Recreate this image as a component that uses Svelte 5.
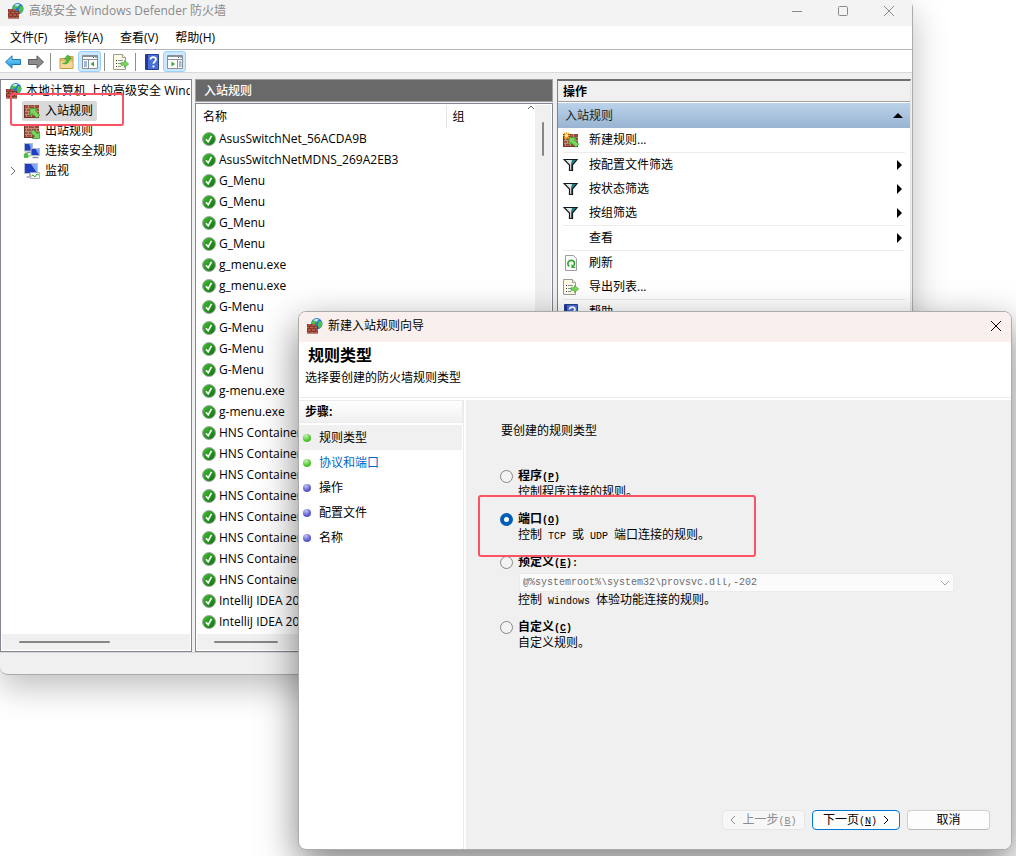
<script lang="ts">
	type Rule = { name: string; group?: string };

	const menus = ['文件(F)', '操作(A)', '查看(V)', '帮助(H)'];

	const repeat = (name: string, count: number): Rule[] => Array.from({ length: count }, () => ({ name }));

	const rules: Rule[] = [
		{ name: 'AsusSwitchNet_56ACDA9B' },
		{ name: 'AsusSwitchNetMDNS_269A2EB3' },
		...repeat('G_Menu', 4),
		...repeat('g_menu.exe', 2),
		...repeat('G-Menu', 4),
		...repeat('g-menu.exe', 2),
		...repeat('HNS Container', 8),
		...repeat('IntelliJ IDEA 20', 2)
	];

	const tree = [
		{ label: '入站规则', icon: 'in' },
		{ label: '出站规则', icon: 'out' },
		{ label: '连接安全规则', icon: 'link' },
		{ label: '监视', icon: 'monitor', expandable: true }
	];

	const actionGroups = [
		[{ label: '新建规则...', icon: 'new', submenu: false }],
		[
			{ label: '按配置文件筛选', icon: 'filter', submenu: true },
			{ label: '按状态筛选', icon: 'filter', submenu: true },
			{ label: '按组筛选', icon: 'filter', submenu: true }
		],
		[{ label: '查看', icon: '', submenu: true }],
		[
			{ label: '刷新', icon: 'refresh', submenu: false },
			{ label: '导出列表...', icon: 'export', submenu: false }
		],
		[{ label: '帮助', icon: 'help', submenu: false }]
	];

	const steps = ['规则类型', '协议和端口', '操作', '配置文件', '名称'];

	let selectedNode = $state('入站规则');
	let currentStep = $state(0);
	let ruleType = $state('port');
	let wizardOpen = $state(true);
</script>

{#snippet bricks()}
	<path d="M0 2h15v13H0z" fill="#9a4a38" />
	<path d="M0 5.500h15M0 8.500h15M0 11.500h15M4.500 2v3M10.500 2v3M7.500 6v2M2.500 6v2M12.500 6v2M4.500 9v2M2.500 12v3M7.500 12v3" stroke="#c9a08f" stroke-width=".8" fill="none" />
	<path d="M1 3.500h3M6 3.500h4M3.500 7h3M1 10h3M3.500 13.500h3" stroke="#b7604a" fill="none" />
	<path d="M0 14.500h15M.5 2v13" stroke="#6f3329" />
{/snippet}

{#snippet icon(name: string)}
	<svg class="icon" viewBox="0 0 16 16" width="16" height="16" aria-hidden="true">
		{#if name === 'firewall'}
			<circle cx="9.800" cy="5.800" r="5.700" fill="#2a77cc" />
			<path d="M5.500 3C7 1 9.500 .5 11 1l-.5 2.500L8 5.500 7 7.500 4.500 6zM12 3l3 .8.3 2.500-2 4-2-1-.5-3z" fill="#4fc04a" />
			<path d="M6.500 2.200Q9 .3 12 1.500L9.500 3.500z" fill="#c8ecff" />
			<path d="M0 6h8v2h3v7.500H0z" fill="#7d3327" />
			<path d="M1 7h2.500M4.500 7H8M0 9.500h2M3 9.500h3.500M7.500 9.500H10M1 12h3M5 12h3M9 12h2M0 14.500h2.500M3.500 14.500h3M7.500 14.500h3" stroke="#bd6650" stroke-width="1.400" />
		{:else if name === 'in' || name === 'out' || name === 'new'}
			{@render bricks()}
			{#if name === 'out'}
				<path d="M15.500 8.500v7h-7l2.200-2.200L6.500 9.200l2.800-2.700 4 4.200z" fill="#79d65c" stroke="#2f8f2a" stroke-width=".7" />
			{:else}
				<path d="M6 5.500h7.500l-2.200 2.200 4.500 4.500-2.900 3.100-4.700-4.700L6 13z" fill="#79d65c" stroke="#2f8f2a" stroke-width=".7" />
			{/if}
			{#if name === 'new'}
				<path d="M3.500 0v7M0 3.500h7M1 1l5 5M6 1L1 6" stroke="#f5a623" stroke-width="1.200" />
				<circle cx="3.500" cy="3.500" r="1.500" fill="#fff2a8" />
			{/if}
		{:else if name === 'link'}
			<rect x=".5" y=".5" width="8" height="7.500" fill="#1f3fc0" stroke="#b4bccb" />
			<path d="M5 1h3v6.500z" fill="#7fa4f5" />
			<path d="M3 9.500h5" stroke="#8b93a5" stroke-width="1.500" />
			<rect x="7" y="5.500" width="8.500" height="7" fill="#1f3fc0" stroke="#b4bccb" />
			<path d="M11.500 6h3.500v6z" fill="#7fa4f5" />
			<path d="M8.500 14.500h6" stroke="#8b93a5" stroke-width="1.500" />
			<path d="M0 14.500v-3l2-2 2 2v3zM4 13h3" fill="#51b947" stroke="#51b947" stroke-width=".8" />
		{:else if name === 'monitor'}
			<rect x=".5" y=".5" width="13" height="10" fill="#1f3fc0" stroke="#b9c0cf" />
			<path d="M7 1h6v9z" fill="#86a9f6" />
			<path d="M5 12h4M2.500 14h5" stroke="#9aa1b0" stroke-width="1.500" />
			<rect x="6.500" y="9.500" width="9" height="6" fill="#f6fbf6" stroke="#9aa6b6" stroke-width=".8" />
			<path d="M7.500 13l1.500-1 2 2 2-3 2 1" fill="none" stroke="#2fa83c" />
		{:else if name === 'back' || name === 'forward'}
			<path
				d="M.5 8L7 1.800V5.500h8.500v5H7v3.700z"
				transform={name === 'forward' ? 'matrix(-1 0 0 1 16 0)' : undefined}
				fill={name === 'back' ? 'url(#blue-arrow)' : '#8c8c8c'}
				stroke={name === 'back' ? '#1b76b8' : '#5c5c5c'}
			/>
		{:else if name === 'up'}
			<path d="M1 4.500h6l1.500-2h5.500v12H1z" fill="#e0bc6c" stroke="#c79b42" />
			<path d="M1.500 7.500h12V14h-12z" fill="#f3d999" />
			<path d="M3.500 9.500c3.500-.3 4-2 4-4.500H5.200L8.800.8 12.500 5h-2.200c0 4-2.300 5.800-6.800 4.500z" fill="#4db93e" stroke="#34922a" stroke-width=".5" />
		{:else if name === 'tree' || name === 'actions'}
			<path d="M.5 1.500h15v13H.5z" fill="#fdfdfd" stroke="#8a8f96" />
			<path d="M1 2.500h14M1 5.500h14" stroke="#8a8f96" />
			<path d="M11 3.500h1M13.500 3.500h1" stroke="#4d5a68" />
			{#if name === 'tree'}
				<path d="M6.500 6v8" stroke="#8a8f96" />
				<path d="M2 8h3M2 10h3M2 12h3" stroke="#4176b8" />
				<path d="M12 7.500v5L8.500 10z" fill="#3ba536" />
			{:else}
				<path d="M10.500 6v8" stroke="#8a8f96" />
				<path d="M12 8h2.500M12 10h2.500M12 12h2.500" stroke="#4176b8" />
				<path d="M4.500 7.500v5L8 10z" fill="#3ba536" />
			{/if}
		{:else if name === 'export'}
			<path d="M.5 .5h9l3 3v12H.5z" fill="#fdfbe6" stroke="#9d9d91" />
			<path d="M9.500.5v3h3" fill="#fff" stroke="#9d9d91" />
			<path d="M3 6.500h1M3 9.500h1M3 12.500h1" stroke="#333" />
			<path d="M5 6.500h5M5 9.500h3M5 12.500h3" stroke="#8692a5" />
			<path d="M8 8.700h3.500V6.500L15.700 10l-4.200 3.500v-2.200H8z" fill="#7bd95a" stroke="#3b9a2b" stroke-width=".6" />
		{:else if name === 'help'}
			<path d="M1.500.5h13v15h-13z" fill="#4a6fd8" stroke="#233f91" />
			<path d="M2 1h2v14H2z" fill="#20389a" />
			<path d="M6.500 5.500C6.500 2.300 12 2.300 12 5.500c0 2-2.600 2-2.600 4.300" fill="none" stroke="#fff" stroke-width="1.700" />
			<path d="M8.500 11.500h1.900v1.900H8.500z" fill="#fff" />
		{:else if name === 'filter'}
			<path d="M1 2.500h13L9.500 8v5.500h-3V8z" fill="#e4e4e4" />
			<path d="M9 3h4L9.500 7.500v6H8V7z" fill="#17807f" />
			<path d="M1 2.500h13L9.500 8v5.500h-3V8z" fill="none" stroke="#101820" stroke-width="1.200" />
		{:else if name === 'refresh'}
			<path d="M2.500 .5h8l3 3v12h-11z" fill="#fbfbfb" stroke="#9d9d9d" />
			<path d="M6.200 11.300A3.300 3.300 0 1 1 10.500 11" fill="none" stroke="#33a62e" stroke-width="1.700" />
			<path d="M8.500 9v4h4z" fill="#33a62e" />
		{:else if name === 'check'}
			<circle cx="8" cy="8" r="6.500" fill="url(#green-disc)" stroke="#a3aaa3" />
			<path d="M5 8.200l2.200 2.600 3.300-6" fill="none" stroke="#fff" stroke-width="1.700" />
		{/if}
	</svg>
{/snippet}

<svg class="defs" aria-hidden="true">
	<defs>
		<linearGradient id="blue-arrow" x1="0" y1="0" x2="0" y2="1">
			<stop offset="0" stop-color="#8bdcff" />
			<stop offset="1" stop-color="#1594dc" />
		</linearGradient>
		<linearGradient id="green-disc" x1="0" y1="0" x2="1" y2="1">
			<stop offset="0" stop-color="#45bf38" />
			<stop offset="1" stop-color="#0b6f0b" />
		</linearGradient>
	</defs>
</svg>

<div class="desktop">
	<main class="window console">
		<header class="titlebar">
			{@render icon('firewall')}
			<h1>高级安全 Windows Defender 防火墙</h1>
			<button class="caption" aria-label="最小化">
				<svg viewBox="0 0 10 10" width="10" height="10"><path d="M0 5.500h10" /></svg>
			</button>
			<button class="caption" aria-label="最大化">
				<svg viewBox="0 0 10 10" width="10" height="10"><rect x=".5" y=".5" width="9" height="9" rx="1" /></svg>
			</button>
			<button class="caption" aria-label="关闭">
				<svg viewBox="0 0 10 10" width="10" height="10"><path d="M0 0l10 10M10 0L0 10" /></svg>
			</button>
		</header>

		<nav class="menubar">
			{#each menus as menu}
				<button>{menu}</button>
			{/each}
		</nav>

		<div class="toolbar">
			<button aria-label="后退">{@render icon('back')}</button>
			<button aria-label="前进">{@render icon('forward')}</button>
			<span class="divider"></span>
			<button aria-label="上移">{@render icon('up')}</button>
			<button class="pressed" aria-label="控制台树">{@render icon('tree')}</button>
			<span class="divider"></span>
			<button aria-label="导出">{@render icon('export')}</button>
			<span class="divider"></span>
			<button aria-label="帮助主题">{@render icon('help')}</button>
			<button class="pressed" aria-label="操作窗格">{@render icon('actions')}</button>
		</div>

		<div class="panes">
			<section class="tree">
				<div class="root">
					{@render icon('firewall')}
					<span>本地计算机 上的高级安全 Windows</span>
				</div>
				<ul>
					{#each tree as node}
						<li>
							<span class="expander">
								{#if node.expandable}
									<svg viewBox="0 0 6 10" width="6" height="10"><path d="M1 1l4 4-4 4" /></svg>
								{/if}
							</span>
							<button class="node" class:selected={selectedNode === node.label} onclick={() => (selectedNode = node.label)}>
								{@render icon(node.icon)}
								{node.label}
							</button>
						</li>
					{/each}
				</ul>
				<div class="hscroll"><span class="thumb"></span></div>
			</section>

			<section class="rules">
				<h2>入站规则</h2>
				<div class="list">
					<div class="list-body">
						<table>
							<thead>
								<tr>
									<th class="name">名称</th>
									<th>
										组
										<svg class="sort" viewBox="0 0 6 4" width="6" height="4"><path d="M0 4l3-3 3 3" /></svg>
									</th>
								</tr>
							</thead>
							<tbody>
								{#each rules as rule}
									<tr>
										<td><div class="cell">{@render icon('check')}<span>{rule.name}</span></div></td>
										<td>{rule.group ?? ''}</td>
									</tr>
								{/each}
							</tbody>
						</table>
						<div class="vscroll"><span class="thumb"></span></div>
					</div>
					<div class="hscroll short"><span class="thumb"></span></div>
				</div>
			</section>

			<aside class="actions">
				<h2>操作</h2>
				<button class="group-title">
					入站规则
					<svg viewBox="0 0 10 5" width="10" height="5"><path d="M0 5l5-5 5 5z" /></svg>
				</button>
				<div class="action-list">
					{#each actionGroups as group}
						<div class="action-group">
							{#each group as action}
								<button>
									{@render icon(action.icon)}
									<span>{action.label}</span>
									{#if action.submenu}
										<svg viewBox="0 0 5 10" width="5" height="10"><path d="M0 0l5 5-5 5z" /></svg>
									{/if}
								</button>
							{/each}
						</div>
					{/each}
				</div>
			</aside>
		</div>
		<footer class="statusbar"></footer>
		<div class="marker tree-marker"></div>
	</main>

	{#if wizardOpen}
		<div class="window wizard" role="dialog" aria-labelledby="wizard-title">
			<header class="titlebar">
				{@render icon('firewall')}
				<h1 id="wizard-title">新建入站规则向导</h1>
				<button class="caption" aria-label="关闭" onclick={() => (wizardOpen = false)}>
					<svg viewBox="0 0 10 10" width="10" height="10"><path d="M0 0l10 10M10 0L0 10" /></svg>
				</button>
			</header>

			<div class="banner">
				<h2>规则类型</h2>
				<p>选择要创建的防火墙规则类型</p>
			</div>

			<div class="wizard-body">
				<nav class="steps">
					<h3>步骤:</h3>
					<ol>
						{#each steps as step, i}
							<li class:current={i === currentStep} class:link={i === currentStep + 1} class:ready={i <= currentStep + 1}>
								<span class="bullet"></span>
								{step}
							</li>
						{/each}
					</ol>
				</nav>

				<form class="page" onsubmit={(e) => e.preventDefault()}>
					<p class="prompt">要创建的规则类型</p>

					<div class="option">
						<input type="radio" id="type-program" name="type" value="program" bind:group={ruleType} />
						<div>
							<label for="type-program">程序<span class="mono">(<u>P</u>)</span></label>
							<p>控制程序连接的规则。</p>
						</div>
					</div>

					<div class="option">
						<input type="radio" id="type-port" name="type" value="port" bind:group={ruleType} />
						<div>
							<label for="type-port">端口<span class="mono">(<u>O</u>)</span></label>
							<p>控制<span class="mono">{' TCP '}</span>或<span class="mono">{' UDP '}</span>端口连接的规则。</p>
						</div>
					</div>

					<div class="option">
						<input type="radio" id="type-predefined" name="type" value="predefined" bind:group={ruleType} />
						<div class="wide">
							<label for="type-predefined">预定义<span class="mono">(<u>E</u>):</span></label>
							<div class="combo">
								<select class="mono" aria-label="预定义" disabled={ruleType !== 'predefined'}>
									<option>@%systemroot%\system32\provsvc.dll,-202</option>
								</select>
								<svg viewBox="0 0 10 6" width="10" height="6"><path d="M1 1l4 4 4-4" /></svg>
							</div>
							<p>控制<span class="mono">{' Windows '}</span>体验功能连接的规则。</p>
						</div>
					</div>

					<div class="option">
						<input type="radio" id="type-custom" name="type" value="custom" bind:group={ruleType} />
						<div>
							<label for="type-custom">自定义<span class="mono">(<u>C</u>)</span></label>
							<p>自定义规则。</p>
						</div>
					</div>

					<div class="buttons">
						<button type="button" disabled={currentStep === 0} onclick={() => currentStep--}>
							<svg viewBox="0 0 6 10" width="6" height="10"><path d="M5 1L1 5l4 4" /></svg>
							<span>上一步<span class="mono">(<u>B</u>)</span></span>
						</button>
						<button class="primary" type="submit">
							<span>下一页<span class="mono">(<u>N</u>)</span></span>
							<svg viewBox="0 0 6 10" width="6" height="10"><path d="M1 1l4 4-4 4" /></svg>
						</button>
						<button type="button" onclick={() => (wizardOpen = false)}>取消</button>
					</div>
				</form>
			</div>
			<div class="marker option-marker"></div>
		</div>
	{/if}
</div>

<style>
	:global(body) {
		margin: 0;
		background: #fff;
	}

	.desktop {
		position: relative;
		min-height: 100vh;
		overflow: hidden;
		font: 12px/16px 'Open Sans', 'Noto Sans CJK SC', sans-serif;
		color: #000;
	}

	.desktop * {
		box-sizing: border-box;
	}

	.defs {
		position: absolute;
		width: 0;
		height: 0;
	}

	h1,
	h2,
	h3,
	p,
	ul,
	ol {
		margin: 0;
		padding: 0;
		font-size: inherit;
		font-weight: normal;
		list-style: none;
	}

	button {
		display: flex;
		align-items: center;
		margin: 0;
		padding: 0;
		border: 0;
		background: none;
		font: inherit;
		color: inherit;
		white-space: nowrap;
	}

	.icon {
		flex: none;
		display: block;
	}

	.mono {
		font-family: 'Liberation Mono', monospace;
		font-size: 10px;
		line-height: 10px;
		white-space: pre;
	}

	.window {
		position: absolute;
		display: flex;
		flex-direction: column;
		border: 1px solid #ababab;
	}

	.titlebar {
		display: flex;
		align-items: center;
		padding-left: 8px;
	}

	.titlebar h1 {
		flex: 1;
	}

	.caption {
		justify-content: center;
		width: 46px;
		height: 26px;
	}

	.caption svg {
		fill: none;
		stroke: currentColor;
	}

	/* Console window */
	.console {
		top: 0;
		left: 0;
		right: 103px;
		border-width: 0 1px 1px 0;
		border-radius: 0 8px 8px 8px;
		background: #f0f0f0;
		box-shadow: 0 12px 34px rgba(0, 0, 0, 0.26);
	}

	.console > .titlebar {
		height: 26px;
		padding-bottom: 4px;
		background: #f3f3f3;
		color: #8a8a8a;
	}

	.console > .titlebar h1 {
		padding-left: 5px;
	}

	.menubar {
		display: flex;
		gap: 1px;
		height: 24px;
		padding-left: 2px;
		background: #fff;
		border-bottom: 1px solid #b4b4bc;
	}

	.menubar button {
		padding: 0 8px;
	}

	.toolbar {
		display: flex;
		align-items: center;
		height: 23px;
		padding: 1px 0 0 1px;
		background: #fff;
		border-bottom: 1px solid #dadada;
	}

	.toolbar button {
		justify-content: center;
		width: 23px;
		height: 21px;
	}

	.toolbar .pressed {
		background: #cce8ff;
		border: 1px solid #99d1ff;
		border-radius: 3px;
	}

	.divider {
		width: 1px;
		height: 18px;
		margin: 0 4px 0 3px;
		background: #8f8f8f;
	}

	.panes {
		display: grid;
		grid-template-columns: 192px minmax(0, 358px) minmax(0, 1fr);
		gap: 3px;
		padding: 6px 1px 0 0;
	}

	.tree {
		display: flex;
		flex-direction: column;
		border: 1px solid #828790;
		background: #fff;
		padding: 1px;
		overflow: hidden;
	}

	.root {
		display: flex;
		align-items: center;
		gap: 4px;
		height: 20px;
		padding-left: 4px;
		white-space: nowrap;
		overflow: hidden;
	}

	.tree li {
		display: flex;
		align-items: center;
		height: 20px;
	}

	.expander {
		display: flex;
		width: 20px;
		padding-left: 8px;
	}

	.expander svg {
		fill: none;
		stroke: #6e6e6e;
	}

	.node {
		gap: 5px;
		height: 20px;
		padding: 0 4px 0 2px;
		border-radius: 2px;
	}

	.node.selected {
		background: #d9d9d9;
	}

	.hscroll {
		display: flex;
		align-items: center;
		height: 16px;
		margin-top: auto;
		padding-left: 17px;
		background: #f0f0f0;
	}

	.thumb {
		width: 53%;
		height: 2px;
		border-radius: 1px;
		background: #868686;
	}

	.short .thumb {
		width: 19%;
	}

	.rules {
		display: flex;
		flex-direction: column;
		min-width: 0;
	}

	.rules h2 {
		height: 23px;
		padding: 3px 8px;
		border: 1px solid #a0a0a0;
		background: #696969;
		color: #fff;
		font-weight: 500;
	}

	.list {
		margin-top: 1px;
		padding: 1px;
		border: 1px solid #828790;
		background: #fff;
	}

	.list-body {
		display: flex;
		height: 529px;
		overflow: hidden;
	}

	table {
		flex: 1;
		align-self: flex-start;
		border-collapse: collapse;
		table-layout: fixed;
		min-width: 0;
	}

	th {
		position: relative;
		height: 23px;
		padding: 0 6px;
		font-weight: normal;
		text-align: left;
	}

	th.name {
		width: 249px;
		border-right: 1px solid #e5e5e5;
	}

	.sort {
		position: absolute;
		top: 0;
		right: 1px;
		fill: none;
		stroke: #606060;
	}

	td {
		height: 21px;
		padding: 0 0 0 4px;
	}

	.cell {
		display: flex;
		align-items: center;
		gap: 2px;
		white-space: nowrap;
	}

	.vscroll {
		display: flex;
		justify-content: center;
		width: 16px;
		padding-top: 17px;
		background: #f0f0f0;
	}

	.vscroll .thumb {
		width: 2px;
		height: 34px;
	}

	.actions {
		margin-left: 1px;
		border: 1px solid #828282;
		border-right-color: #e3e3e3;
		border-top: 2px solid #6e6e6e;
		background: #fff;
	}

	.actions h2 {
		height: 21px;
		padding: 3px 5px;
		border-bottom: 1px solid #a0a0a0;
		background: #f0f0f0;
		font-weight: bold;
	}

	.group-title {
		justify-content: space-between;
		width: 100%;
		height: 26px;
		padding: 0 7px;
		background: linear-gradient(#bcd2ea, #98b4d2);
		border-top: 1px solid #fff;
		color: #1e1e1e;
	}

	.group-title svg {
		fill: #000;
	}

	.action-list {
		padding: 0 5px;
	}

	.action-group + .action-group {
		border-top: 1px solid #ebebeb;
	}

	.action-group button {
		width: 100%;
		height: 24px;
		padding-right: 3px;
	}

	.action-group span {
		flex: 1;
		padding-left: 10px;
		text-align: left;
	}

	.statusbar {
		height: 22px;
		border-top: 1px solid #d7d7d7;
	}

	/* Wizard */
	.wizard {
		top: 311px;
		left: 298px;
		right: 4px;
		bottom: 6px;
		border-radius: 8px;
		background: #fff;
		box-shadow: 0 14px 38px rgba(0, 0, 0, 0.5);
	}

	.wizard > .titlebar {
		flex: none;
		height: 30px;
		padding-bottom: 2px;
		border-radius: 7px 7px 0 0;
		background: #f9f0ee;
	}

	.wizard > .titlebar h1 {
		padding-left: 5px;
	}

	.wizard .caption {
		width: 30px;
	}

	.banner {
		height: 56px;
		padding: 3px 6px;
		border-bottom: 1px solid #ebebeb;
	}

	.banner h2 {
		padding-left: 3px;
		font-size: 16px;
		line-height: 20px;
		font-weight: bold;
	}

	.banner p {
		padding-top: 5px;
	}

	.wizard-body {
		flex: 1;
		display: grid;
		grid-template-columns: 165px minmax(0, 1fr);
		gap: 2px;
		padding-top: 2px;
	}

	.steps h3 {
		height: 23px;
		padding: 3px 6px;
		border: solid #ebebeb;
		border-width: 1px 1px 1px 0;
		background: linear-gradient(#fff, #f0f0f0);
		font-weight: bold;
	}

	.steps {
		border-right: 1px solid #ebebeb;
	}

	.steps ol {
		padding-top: 2px;
	}

	.steps li {
		display: flex;
		align-items: center;
		gap: 8px;
		height: 25px;
		margin-right: 1px;
		padding-left: 4px;
	}

	.steps li.current {
		background: #f0f0f0;
	}

	.steps li.link {
		color: #0066cc;
	}

	.bullet {
		width: 8px;
		height: 8px;
		border-radius: 4px;
		background: radial-gradient(circle at 3px 2px, #c4c4f4, #5a5ac8 60%);
	}

	.ready .bullet {
		background: radial-gradient(circle at 3px 2px, #c8f5b4, #4cc22e 60%);
	}

	.page {
		display: flex;
		flex-direction: column;
		padding: 23px 21px 19px 34px;
		border-radius: 0 0 8px 0;
		background: #f0f0f0;
	}

	.prompt {
		margin-bottom: 29px;
		padding-left: 1px;
	}

	.option {
		display: flex;
		gap: 5px;
		margin-bottom: 11px;
	}

	.option .wide {
		flex: 1;
		margin-right: 36px;
	}

	.option input {
		appearance: none;
		flex: none;
		width: 13px;
		height: 13px;
		margin: 2px 0 0;
		border: 1px solid #868686;
		border-radius: 50%;
		background: #f3f3f3;
	}

	.option input:checked {
		border: 4px solid #005fb8;
		background: #fff;
	}

	.option label {
		display: block;
		font-weight: bold;
	}

	.combo {
		position: relative;
		margin: 3px 0 0 1px;
	}

	.combo select {
		appearance: none;
		display: block;
		width: 100%;
		height: 19px;
		padding: 0 3px;
		border: 1px solid #ebebeb;
		border-radius: 0;
		background: #fbfbfb;
		color: #6d6d6d;
		opacity: 1;
	}

	.combo svg {
		position: absolute;
		top: 7px;
		right: 4px;
		fill: none;
		stroke: #a0a0a0;
	}

	.buttons {
		display: flex;
		justify-content: flex-end;
		gap: 7px;
		margin-top: auto;
	}

	.buttons button {
		justify-content: center;
		gap: 6px;
		width: 83px;
		height: 20px;
		border: 1px solid #d0d0d0;
		border-bottom-color: #bababa;
		border-radius: 4px;
		background: #fdfdfd;
	}

	.buttons button:disabled {
		border-color: #e6e6e6;
		background: #f7f7f7;
		color: #8c8c8c;
	}

	.buttons .primary {
		width: 88px;
		border-color: #0078d4;
	}

	.buttons svg {
		fill: none;
		stroke: currentColor;
	}

	/* Red highlight frames */
	.marker {
		position: absolute;
		border: 2px solid #fb5365;
		border-radius: 3px;
		pointer-events: none;
	}

	.tree-marker {
		top: 93px;
		left: 10px;
		width: 114px;
		height: 33px;
	}

	.option-marker {
		top: 183px;
		left: 179px;
		width: 278px;
		height: 62px;
	}
</style>
